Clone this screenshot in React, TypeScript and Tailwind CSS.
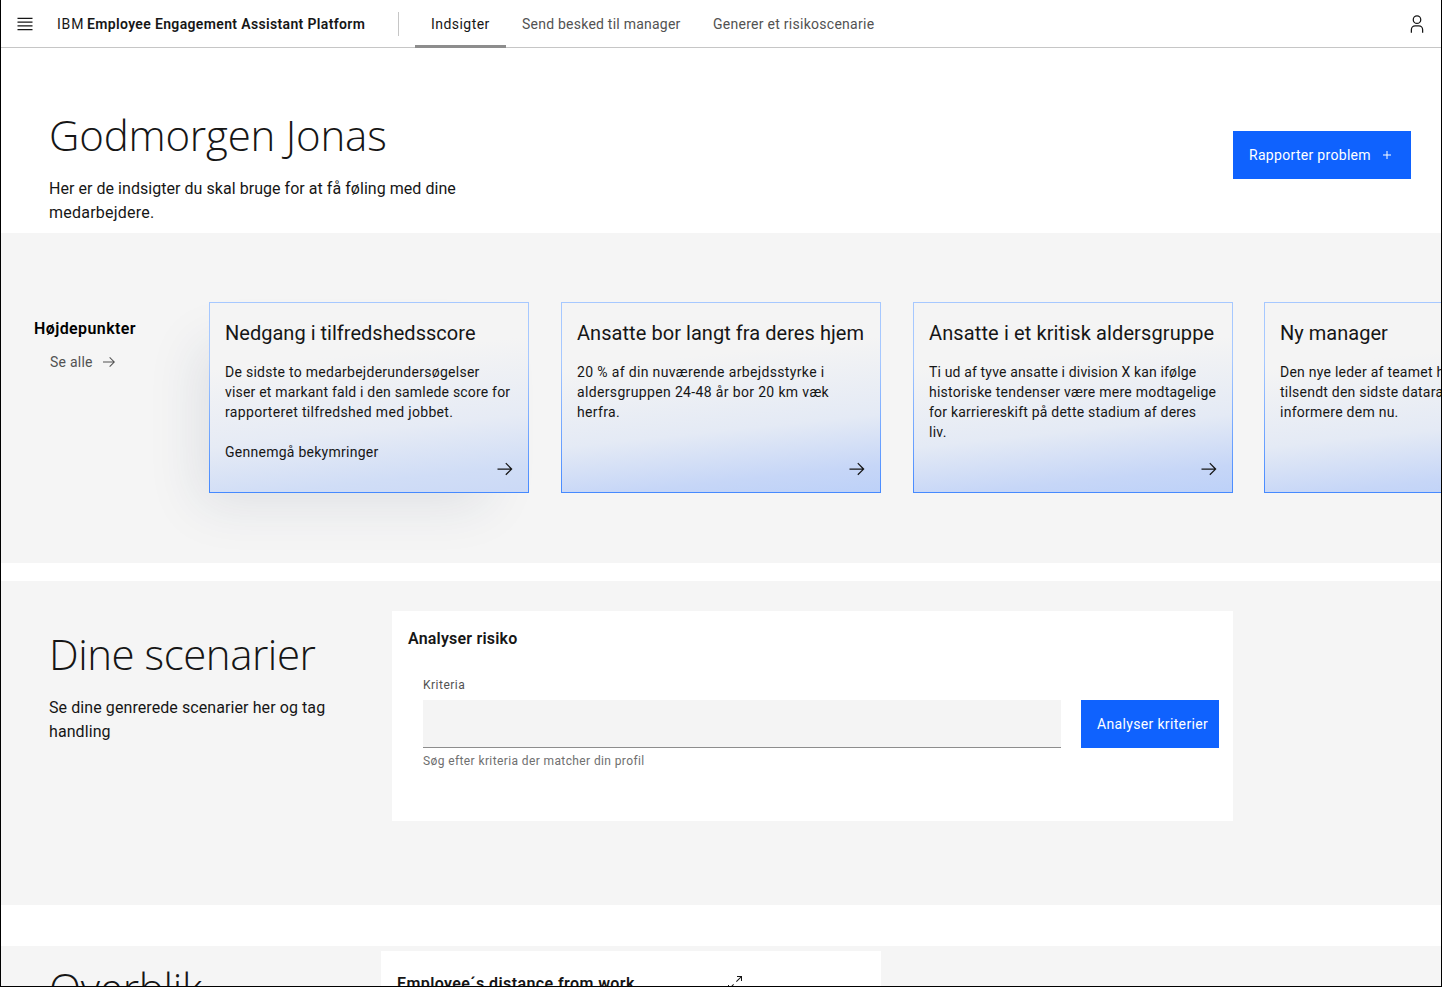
import type { ReactNode } from "react";

function ArrowRight({ className }: { className: string }) {
  return (
    <svg viewBox="0 0 32 32" fill="currentColor" className={className}>
      <path d="M18 6 16.57 7.393 24.15 15H4v2h20.15l-7.58 7.573L18 26l10-10z" />
    </svg>
  );
}

function MenuIcon() {
  return (
    <svg viewBox="0 0 32 32" fill="currentColor" className="size-5">
      <path d="M4 6h24v2H4zM4 24h24v2H4zM4 12h24v2H4zM4 18h24v2H4z" />
    </svg>
  );
}

function UserIcon() {
  return (
    <svg viewBox="0 0 32 32" fill="currentColor" className="size-5">
      <path d="M16 4a5 5 0 1 1-5 5 5 5 0 0 1 5-5m0-2a7 7 0 1 0 7 7 7 7 0 0 0-7-7zM26 30h-2v-5a5 5 0 0 0-5-5h-6a5 5 0 0 0-5 5v5H6v-5a7 7 0 0 1 7-7h6a7 7 0 0 1 7 7z" />
    </svg>
  );
}

function AddIcon() {
  return (
    <svg viewBox="0 0 32 32" fill="currentColor" className="size-4">
      <path d="M17 15V8h-2v7H8v2h7v7h2v-7h7v-2z" />
    </svg>
  );
}

function MaximizeIcon() {
  return (
    <svg viewBox="0 0 32 32" fill="currentColor" className="size-4">
      <path d="M20 2v2h6.586L18 12.582 19.414 14 28 5.414V12h2V2zM14 19.416 12.592 18 4 26.586V20H2v10h10v-2H5.414z" />
    </svg>
  );
}

function Heading({ className, children }: { className: string; children: ReactNode }) {
  return (
    <h1 className={`font-['Open_Sans',sans-serif] text-[42px] leading-[50px] font-light whitespace-nowrap ${className}`}>
      {children}
    </h1>
  );
}

type Highlight = {
  title: string;
  titleClass: string;
  lines: [string, string][];
  className: string;
};

const highlights: Highlight[] = [
  {
    title: "Nedgang i tilfredshedsscore",
    titleClass: "tracking-[0.02px]",
    lines: [
      ["De sidste to medarbejderundersøgelser", "tracking-[0.27px]"],
      ["viser et markant fald i den samlede score for", "tracking-[0.19px]"],
      ["rapporteret tilfredshed med jobbet.", "tracking-[0.33px]"],
      ["", ""],
      ["Gennemgå bekymringer", "tracking-[0.26px]"],
    ],
    className:
      "shadow-[-26px_27px_50px_-16px_rgba(30,45,90,0.10)] [background:linear-gradient(174deg,#f4f4f4_30%,#e6ebf5_65%,#d0ddf6_88%,#cbd9f6)_padding-box,linear-gradient(180deg,#a6c8ff,#a6c8ff_30%,#4589ff)_border-box]",
  },
  {
    title: "Ansatte bor langt fra deres hjem",
    titleClass: "tracking-[0.055px]",
    lines: [
      ["20 % af din nuværende arbejdsstyrke i", "tracking-[0.35px]"],
      ["aldersgruppen 24-48 år bor 20 km væk", "tracking-[0.35px]"],
      ["herfra.", "tracking-[0.33px]"],
    ],
    className:
      "[background:linear-gradient(174deg,#f4f4f4_30%,#e4eaf5_65%,#c6d6f7_88%,#bdd1f8)_padding-box,linear-gradient(180deg,#a6c8ff,#a6c8ff_30%,#4589ff)_border-box]",
  },
  {
    title: "Ansatte i et kritisk aldersgruppe",
    titleClass: "tracking-[0.12px]",
    lines: [
      ["Ti ud af tyve ansatte i division X kan ifølge", "tracking-[0.15px]"],
      ["historiske tendenser være mere modtagelige", "tracking-[0.25px]"],
      ["for karriereskift på dette stadium af deres", "tracking-[0.22px]"],
      ["liv.", "tracking-[0.26px]"],
    ],
    className:
      "[background:linear-gradient(174deg,#f4f4f4_30%,#e4eaf5_65%,#c6d6f7_88%,#bdd1f8)_padding-box,linear-gradient(180deg,#a6c8ff,#a6c8ff_30%,#4589ff)_border-box]",
  },
  {
    title: "Ny manager",
    titleClass: "tracking-[0.015px]",
    lines: [
      ["Den nye leder af teamet har", "tracking-[0.24px]"],
      ["tilsendt den sidste datarapport,", "tracking-[0.23px]"],
      ["informere dem nu.", "tracking-[0.26px]"],
    ],
    className:
      "-ml-px [background:linear-gradient(174deg,#f4f4f4_30%,#e4eaf5_65%,#c6d6f7_88%,#bdd1f8)_padding-box,linear-gradient(180deg,#a6c8ff,#a6c8ff_30%,#4589ff)_border-box]",
  },
];

function HighlightCard({ title, titleClass, lines, className }: Highlight) {
  return (
    <article className={`relative h-[191px] w-80 shrink-0 border border-transparent px-[15px] pt-4 ${className}`}>
      <h3 className={`text-xl leading-7 whitespace-nowrap ${titleClass}`}>{title}</h3>
      <div className="mt-[15px] text-sm leading-5 whitespace-nowrap">
        {lines.map(([text, tracking], i) => (
          <p key={i} className={`h-5 ${tracking}`}>
            {text}
          </p>
        ))}
      </div>
      <ArrowRight className="absolute right-[13px] bottom-[13px] size-5" />
    </article>
  );
}

export default function App() {
  return (
    <div className="flex h-[987px] w-[1442px] flex-col overflow-hidden border-x border-b border-black bg-white font-[Roboto,sans-serif] text-[#161616]">
      <header className="flex h-12 shrink-0 items-center border-b border-[#c6c6c6] pr-3.5 pl-3.5">
        <MenuIcon />
        <div className="ml-[22px] flex w-[341px] items-center text-sm whitespace-nowrap">
          <span className="w-[30px] tracking-[0.8px]">IBM</span>
          <span className="font-semibold tracking-[0.35px]">Employee Engagement Assistant Platform</span>
        </div>
        <div className="h-6 w-px bg-[#c6c6c6]" />
        <nav className="ml-4 flex h-12 text-sm whitespace-nowrap text-[#525252]">
          <a className="flex h-12 w-[91px] items-center border-b-[3px] border-[#8d8d8d] pt-[3px] pl-4 tracking-[0.45px] text-[#161616]">
            Indsigter
          </a>
          <a className="flex w-[191px] items-center pl-4 tracking-[0.23px]">Send besked til manager</a>
          <a className="flex items-center pl-4 tracking-[0.27px]">Generer et risikoscenarie</a>
        </nav>
        <div className="ml-auto">
          <UserIcon />
        </div>
      </header>

      <section className="flex h-[185px] shrink-0 justify-between pr-[30px] pl-12">
        <div className="pt-[62px]">
          <Heading className="tracking-[-0.18px]">Godmorgen Jonas</Heading>
          <p className="mt-[17px] text-base leading-6">
            <span className="block tracking-[0.045px]">Her er de indsigter du skal bruge for at få føling med dine</span>
            <span className="block tracking-[0.23px]">medarbejdere.</span>
          </p>
        </div>
        <button className="mt-[83px] flex h-12 w-[178px] items-center justify-between bg-[#0f62fe] px-4 text-sm tracking-[0.31px] whitespace-nowrap text-white">
          Rapporter problem
          <AddIcon />
        </button>
      </section>

      <section className="flex h-[330px] shrink-0 overflow-hidden bg-[#f5f5f5] pt-[69px]">
        <div className="w-52 shrink-0 pt-[15px] pl-[33px]">
          <h2 className="text-base leading-6 font-semibold tracking-[0.4px] text-black">Højdepunkter</h2>
          <a className="mt-[11px] ml-4 flex items-center gap-2 text-sm leading-5 tracking-[0.23px] text-[#525252]">
            Se alle
            <ArrowRight className="size-4" />
          </a>
        </div>
        <div className="flex gap-8">
          {highlights.map((h) => (
            <HighlightCard key={h.title} {...h} />
          ))}
        </div>
      </section>

      <section className="mt-[18px] flex h-[324px] shrink-0 bg-[#f5f5f5]">
        <div className="w-[391px] shrink-0 pt-12 pl-12">
          <Heading className="tracking-[-0.46px]">Dine scenarier</Heading>
          <p className="mt-[17px] text-base leading-6 tracking-[0.085px]">
            Se dine genrerede scenarier her og tag
            <br />
            handling
          </p>
        </div>
        <div className="mt-[30px] h-[210px] w-[841px] bg-white pt-4">
          <h2 className="pl-4 text-base leading-6 font-semibold tracking-[0.2px]">Analyser risiko</h2>
          <div className="mt-[26px] flex gap-5 pl-[31px]">
            <label className="block w-[638px] text-xs">
              <span className="block h-4 leading-4 tracking-[0.5px] text-[#525252]">Kriteria</span>
              <input className="mt-[7px] block h-12 w-full border-b border-[#8d8d8d] bg-[#f4f4f4] px-4" />
              <span className="mt-[5px] block leading-4 tracking-[0.39px] text-[#6f6f6f]">
                Søg efter kriteria der matcher din profil
              </span>
            </label>
            <button className="mt-[23px] h-12 w-[138px] bg-[#0f62fe] pl-4 text-left text-sm tracking-[0.34px] whitespace-nowrap text-white">
              Analyser kriterier
            </button>
          </div>
        </div>
      </section>

      <section className="mt-[41px] flex h-10 shrink-0 overflow-hidden bg-[#f5f5f5]">
        <div className="w-[380px] shrink-0 pt-[17px] pl-12">
          <Heading className="tracking-[-0.26px]">Overblik</Heading>
        </div>
        <div className="mt-[5px] flex h-[60px] w-[500px] shrink-0 items-start bg-white pt-[21px] pl-4">
          <h2 className="w-[330px] text-base leading-6 font-semibold tracking-[0.41px]">Employee´s distance from work</h2>
          <div className="mt-[3px]">
            <MaximizeIcon />
          </div>
        </div>
      </section>
    </div>
  );
}
